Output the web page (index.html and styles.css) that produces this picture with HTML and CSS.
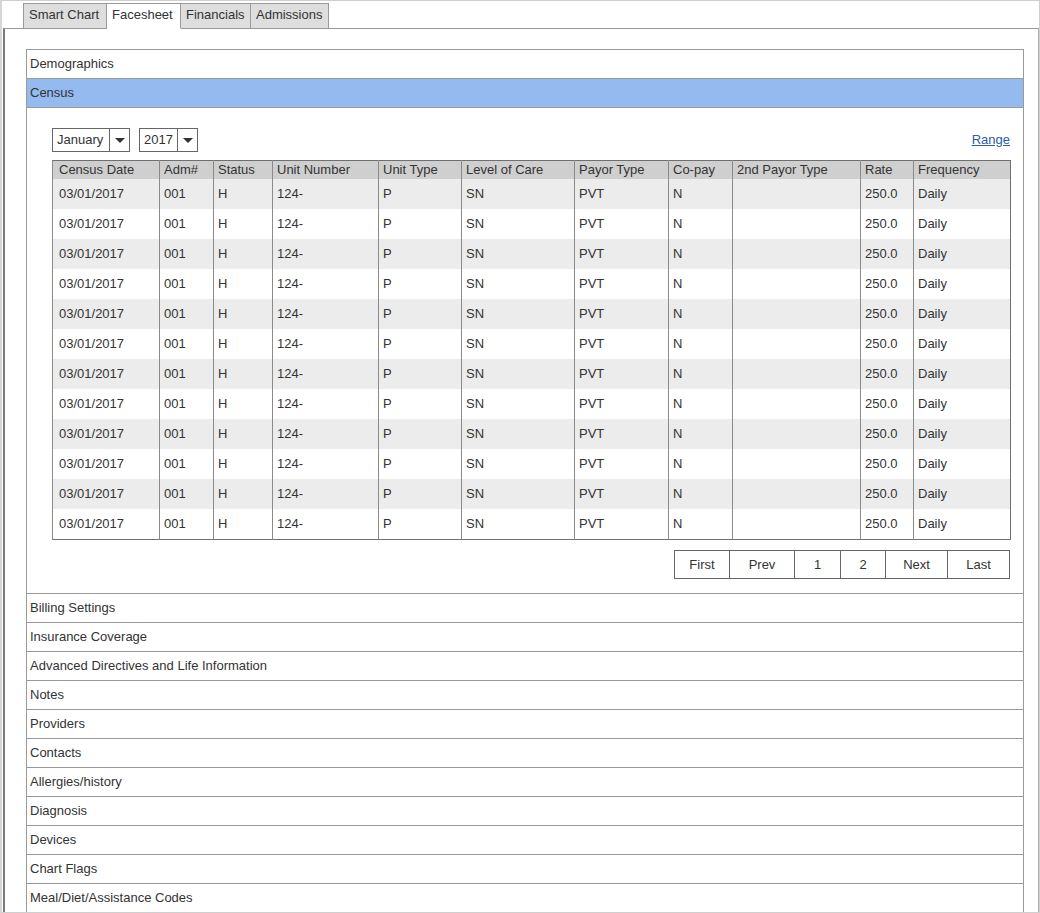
FILE: index.html
```html
<!DOCTYPE html>
<html>
<head>
<meta charset="utf-8">
<link rel="stylesheet" href="styles.css">
</head>
<body>
<div class="frame">
  <div class="tabs">
    <div class="tab">Smart Chart</div>
    <div class="tab active">Facesheet</div>
    <div class="tab">Financials</div>
    <div class="tab">Admissions</div>
  </div>
  <div class="panel">
    <div class="accordion">
      <div class="acc-head">Demographics</div>
      <div class="acc-head open">Census</div>
      <div class="acc-body">
        <div class="toolbar">
          <div class="selects">
            <div class="select month"><span class="sel-text">January</span><span class="sel-btn"><span class="tri"></span></span></div>
            <div class="select year"><span class="sel-text">2017</span><span class="sel-btn"><span class="tri"></span></span></div>
          </div>
          <a class="range" href="#">Range</a>
        </div>
        <table class="grid">
          <colgroup>
            <col class="c1"><col class="c2"><col class="c3"><col class="c4"><col class="c5"><col class="c6"><col class="c7"><col class="c8"><col class="c9"><col class="c10"><col class="c11">
          </colgroup>
          <thead>
            <tr><th>Census Date</th><th>Adm#</th><th>Status</th><th>Unit Number</th><th>Unit Type</th><th>Level of Care</th><th>Payor Type</th><th>Co-pay</th><th>2nd Payor Type</th><th>Rate</th><th>Frequency</th></tr>
          </thead>
          <tbody>
            <tr><td>03/01/2017</td><td>001</td><td>H</td><td>124-</td><td>P</td><td>SN</td><td>PVT</td><td>N</td><td></td><td>250.0</td><td>Daily</td></tr>
            <tr><td>03/01/2017</td><td>001</td><td>H</td><td>124-</td><td>P</td><td>SN</td><td>PVT</td><td>N</td><td></td><td>250.0</td><td>Daily</td></tr>
            <tr><td>03/01/2017</td><td>001</td><td>H</td><td>124-</td><td>P</td><td>SN</td><td>PVT</td><td>N</td><td></td><td>250.0</td><td>Daily</td></tr>
            <tr><td>03/01/2017</td><td>001</td><td>H</td><td>124-</td><td>P</td><td>SN</td><td>PVT</td><td>N</td><td></td><td>250.0</td><td>Daily</td></tr>
            <tr><td>03/01/2017</td><td>001</td><td>H</td><td>124-</td><td>P</td><td>SN</td><td>PVT</td><td>N</td><td></td><td>250.0</td><td>Daily</td></tr>
            <tr><td>03/01/2017</td><td>001</td><td>H</td><td>124-</td><td>P</td><td>SN</td><td>PVT</td><td>N</td><td></td><td>250.0</td><td>Daily</td></tr>
            <tr><td>03/01/2017</td><td>001</td><td>H</td><td>124-</td><td>P</td><td>SN</td><td>PVT</td><td>N</td><td></td><td>250.0</td><td>Daily</td></tr>
            <tr><td>03/01/2017</td><td>001</td><td>H</td><td>124-</td><td>P</td><td>SN</td><td>PVT</td><td>N</td><td></td><td>250.0</td><td>Daily</td></tr>
            <tr><td>03/01/2017</td><td>001</td><td>H</td><td>124-</td><td>P</td><td>SN</td><td>PVT</td><td>N</td><td></td><td>250.0</td><td>Daily</td></tr>
            <tr><td>03/01/2017</td><td>001</td><td>H</td><td>124-</td><td>P</td><td>SN</td><td>PVT</td><td>N</td><td></td><td>250.0</td><td>Daily</td></tr>
            <tr><td>03/01/2017</td><td>001</td><td>H</td><td>124-</td><td>P</td><td>SN</td><td>PVT</td><td>N</td><td></td><td>250.0</td><td>Daily</td></tr>
            <tr><td>03/01/2017</td><td>001</td><td>H</td><td>124-</td><td>P</td><td>SN</td><td>PVT</td><td>N</td><td></td><td>250.0</td><td>Daily</td></tr>
          </tbody>
        </table>
        <div class="pager">
          <div class="pg p-first">First</div>
          <div class="pg p-prev">Prev</div>
          <div class="pg p-1">1</div>
          <div class="pg p-2">2</div>
          <div class="pg p-next">Next</div>
          <div class="pg p-last">Last</div>
        </div>
      </div>
      <div class="acc-head">Billing Settings</div>
      <div class="acc-head">Insurance Coverage</div>
      <div class="acc-head">Advanced Directives and Life Information</div>
      <div class="acc-head">Notes</div>
      <div class="acc-head">Providers</div>
      <div class="acc-head">Contacts</div>
      <div class="acc-head">Allergies/history</div>
      <div class="acc-head">Diagnosis</div>
      <div class="acc-head">Devices</div>
      <div class="acc-head">Chart Flags</div>
      <div class="acc-head">Meal/Diet/Assistance Codes</div>
    </div>
  </div>
</div>
</body>
</html>
```

FILE: styles.css
```css
* { box-sizing: border-box; }
html, body { margin: 0; padding: 0; background: #fff; }
body {
  font-family: "Liberation Sans", Arial, sans-serif;
  font-size: 13px;
  color: #333;
}
.frame {
  width: 1040px;
  height: 913px;
  border: 1px solid #cfcfcf;
  border-left: 2px solid #d6d6d6;
  overflow: hidden;
  padding-top: 2px;
  display: flex;
  flex-direction: column;
}
.tabs {
  display: flex;
  padding-left: 21px;
  height: 26px;
  position: relative;
  z-index: 1;
}
.tab {
  height: 26px;
  padding: 0 5px;
  border: 1px solid #9a9a9a;
  border-left: none;
  background: #dedede;
  line-height: 22px;
  color: #333;
}
.tab:first-child { border-left: 1px solid #9a9a9a; }
.tab.active {
  background: #fff;
  border-bottom-color: #fff;
}
.tab:nth-child(1) { width: 84px; }
.tab:nth-child(2) { width: 74px; }
.tab:nth-child(3) { width: 70px; }
.tab:nth-child(4) { width: 78px; }
.panel {
  flex: 1;
  margin-top: -1px;
  margin-left: 1px;
  border-top: 1px solid #9a9a9a;
  border-left: 2px solid #7a7a7a;
  border-right: 1px solid #b0b0b0;
  padding: 20px 14px 0 21px;
  overflow: hidden;
}
.accordion {
  border: 1px solid #999;
  border-bottom: none;
}
.acc-head {
  height: 29px;
  line-height: 28px;
  padding-left: 3px;
  border-top: 1px solid #999;
  background: #fff;
  color: #333;
}
.acc-head:first-child { border-top: none; height: 28px; }
.acc-head.open {
  background: #94baf0;
  border-bottom: 1px solid #999;
  height: 30px;
}
.acc-body {
  padding: 20px 13px 14px 25px;
}
.toolbar {
  display: flex;
  justify-content: space-between;
  align-items: flex-end;
  height: 24px;
  margin-bottom: 8px;
}
.selects { display: flex; gap: 9px; }
.select {
  display: flex;
  height: 24px;
  border: 1px solid #666;
  background: #fff;
}
.select.month { width: 78px; }
.select.year { width: 59px; }
.sel-text {
  flex: 1;
  padding-left: 4px;
  line-height: 22px;
  border-right: 1px solid #666;
}
.sel-btn {
  width: 19px;
  display: flex;
  align-items: center;
  justify-content: center;
}
.tri {
  width: 0; height: 0;
  border-left: 5px solid transparent;
  border-right: 5px solid transparent;
  border-top: 5px solid #333;
}
.range {
  color: #2d5ca8;
  text-decoration: underline;
  line-height: 16px;
  margin-bottom: 4px;
}
.grid {
  width: 958px;
  border-collapse: collapse;
  table-layout: fixed;
  border: 1px solid #6f6f6f;
}
.grid col.c1 { width: 107px; }
.grid col.c2 { width: 54px; }
.grid col.c3 { width: 59px; }
.grid col.c4 { width: 106px; }
.grid col.c5 { width: 83px; }
.grid col.c6 { width: 113px; }
.grid col.c7 { width: 94px; }
.grid col.c8 { width: 64px; }
.grid col.c9 { width: 128px; }
.grid col.c10 { width: 53px; }
.grid col.c11 { width: 97px; }
.grid th, .grid td {
  border-left: 1px solid #8a8a8a;
  text-align: left;
  font-weight: normal;
  padding: 0 0 0 4px;
  white-space: nowrap;
  overflow: hidden;
  color: #333;
}
.grid th:first-child, .grid td:first-child { padding-left: 6px; }
.grid th {
  height: 18px;
  line-height: 16px;
  background: #cfcfcf;
}
.grid td {
  height: 30px;
  line-height: 27px;
}
.grid tbody tr:nth-child(odd) td { background: #ececec; }
.grid tbody tr:nth-child(even) td { background: #fff; }
.grid tbody tr:last-child td { height: 31px; }
.pager {
  display: flex;
  justify-content: flex-end;
  margin-top: 10px;
}
.pg {
  height: 29px;
  line-height: 28px;
  text-align: center;
  border: 1px solid #666;
  border-left: none;
  background: #fff;
  color: #333;
}
.pg:first-child { border-left: 1px solid #666; }
.p-first { width: 56px; }
.p-prev { width: 65px; }
.p-1 { width: 46px; }
.p-2 { width: 45px; }
.p-next { width: 62px; }
.p-last { width: 62px; }
```
